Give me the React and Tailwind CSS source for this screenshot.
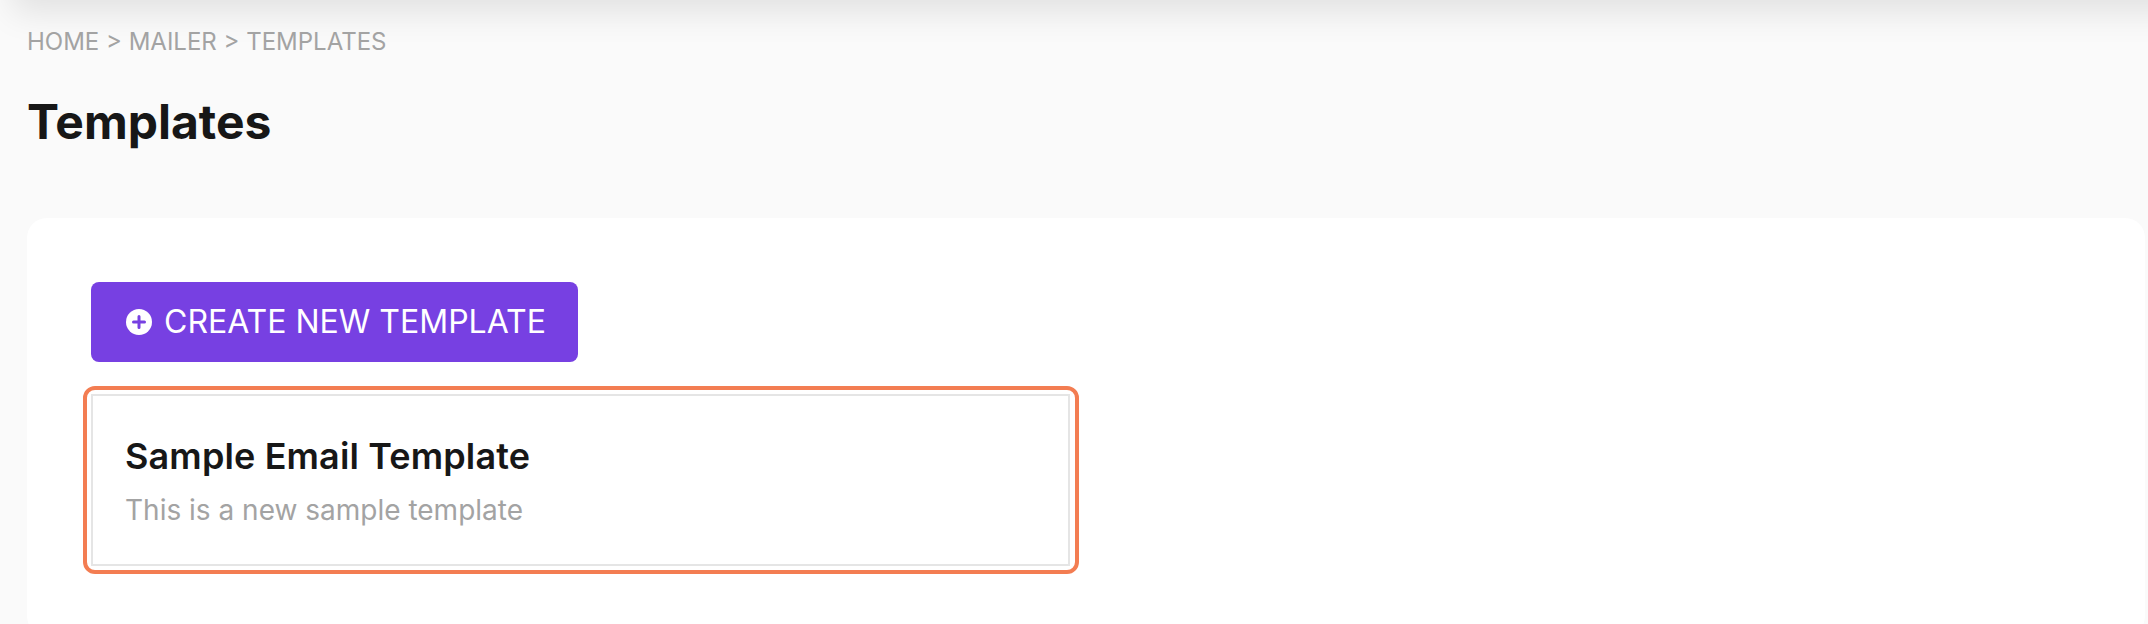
export default function App() {
  return (
    <div className="min-h-[624px] h-[624px] overflow-hidden bg-[#fafafa] font-['Inter',sans-serif] antialiased">
      <div className="h-0 ml-[72px] shadow-[0_-48px_32px_60px_rgba(0,0,0,0.1)]" />
      <div className="pl-[27px] pr-[3px]">
        <div className="pt-[28px] text-2xl leading-[28px] text-[#a3a3a3]">HOME &gt; MAILER &gt; TEMPLATES</div>
        <h1 className="mt-[37px] text-5xl leading-[58px] font-bold text-[#171717]">Templates</h1>
        <div className="mt-[67px] h-[418px] rounded-[20px] bg-white p-16">
          <button className="flex h-20 w-[487px] items-center gap-[12px] rounded-lg bg-[#7740e2] pl-[35px] text-[32px] leading-none text-white">
            <svg width="26" height="26" viewBox="0 0 26 26">
              <circle cx="13" cy="13" r="13" fill="#fff" />
              <path d="M13 7.5v11M7.5 13h11" stroke="#7740e2" strokeWidth="3" strokeLinecap="round" />
            </svg>
            CREATE NEW TEMPLATE
          </button>
          <div className="-ml-2 mt-6 w-[996px] rounded-xl border-4 border-[#f37d52] py-1 pl-1 pr-[5px]">
            <div className="h-[172px] border-2 border-[#e5e5e5] pl-8 pt-[40px]">
              <div className="text-4xl leading-10 font-semibold tracking-[0.13px] text-[#171717]">Sample Email Template</div>
              <div className="mt-[16px] text-[28px] leading-9 text-[#a3a3a3]">This is a new sample template</div>
            </div>
          </div>
        </div>
      </div>
    </div>
  );
}
